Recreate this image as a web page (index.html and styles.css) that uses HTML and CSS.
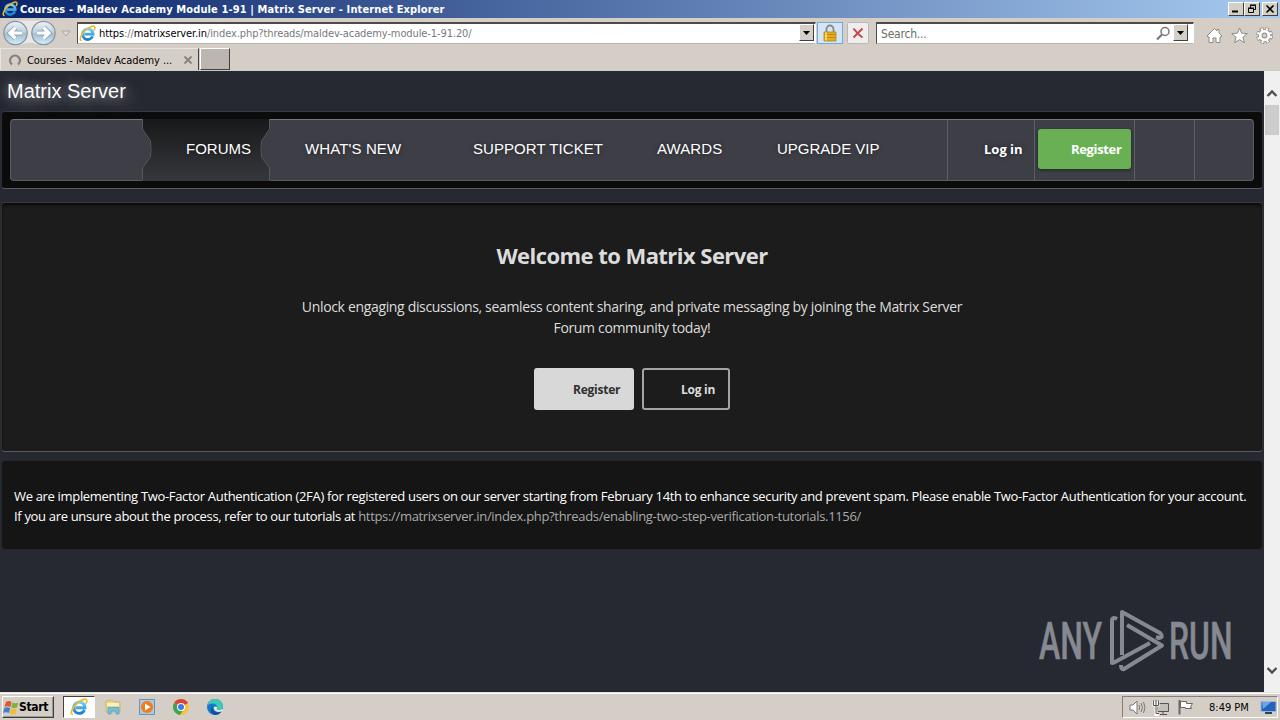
FILE: index.html
```html
<!DOCTYPE html>
<html lang="en">
<head>
<meta charset="utf-8">
<title>Courses - Maldev Academy Module 1-91 | Matrix Server</title>
<link rel="stylesheet" href="styles.css">
</head>
<body>
<svg class="defs" width="0" height="0">
  <defs>
    <linearGradient id="iebl" x1="0" y1="0" x2="0" y2="1"><stop offset="0" stop-color="#6fd0f8"/><stop offset="1" stop-color="#1b7fd0"/></linearGradient>
    <linearGradient id="ball" x1="0" y1="0" x2="0" y2="1"><stop offset="0" stop-color="#eef2f5"/><stop offset=".45" stop-color="#c3d2de"/><stop offset=".55" stop-color="#a4bdd0"/><stop offset="1" stop-color="#d8f0fa"/></linearGradient>
    <linearGradient id="tab" x1="0" y1="0" x2="0" y2="1"><stop offset="0" stop-color="#18191a"/><stop offset="1" stop-color="#35383c"/></linearGradient>
    <symbol id="ie" viewBox="0 0 16 16">
      <path d="M12.900 10.600A5 5 0 1 1 13.300 8.600H5" fill="none" stroke="url(#iebl)" stroke-width="2.600"/>
      <path d="M2.600 14.600C-.6 14.600 2 8 7 4.200 10.500 1.400 14.800 -.2 15 2.300c.1 1-.4 2-1 2.800" fill="none" stroke="#edb92e" stroke-width="1.500"/>
    </symbol>
  </defs>
</svg>

<header class="titlebar">
  <svg class="title-icon" width="16" height="16"><use href="#ie"/></svg>
  <span class="title-text">Courses - Maldev Academy Module 1-91 | Matrix Server - Internet Explorer</span>
  <div class="win-buttons">
    <span class="win-btn"><svg width="14" height="12"><path d="M3 8.500h6" stroke="#000" stroke-width="2"/></svg></span>
    <span class="win-btn"><svg width="14" height="12"><path d="M5.500 5V2.500h5v4H8.500M3.500 5.500h5v4h-5zM5 2h6M3 5h6" fill="none" stroke="#000"/></svg></span>
    <span class="win-btn last"><svg width="14" height="12"><path d="M3.500 2.500l7 7M10.500 2.500l-7 7" stroke="#000" stroke-width="1.600"/></svg></span>
  </div>
</header>

<div class="toolbar">
  <svg class="nav-balls" width="76" height="28">
    <path d="M15.500 1.500H43a12 12 0 0 1 12.500 12.500A12 12 0 0 1 43 26.500c-6 0-8-3-13.500-3s-7 3-14 3z" fill="#f2f2f2" opacity=".7"/>
    <g stroke="#7f96a8" stroke-width="1.200"><circle cx="15.500" cy="14" r="11.700" fill="url(#ball)"/><circle cx="43.500" cy="14" r="11.700" fill="url(#ball)"/></g>
    <g fill="none" stroke="#8ba6bb" stroke-width="5"><path d="M22 14H11M15.500 8.500L10 14l5.500 5.500"/><path d="M37 14h11M43.500 8.500L49 14l-5.500 5.500"/></g>
    <g fill="none" stroke="#fff" stroke-width="3.200"><path d="M22 14H11M15.500 8.500L10 14l5.500 5.500"/><path d="M37 14h11M43.500 8.500L49 14l-5.500 5.500"/></g>
    <path d="M62 12h8l-4 5z" fill="#dfdcd7" stroke="#aaa7a2"/>
  </svg>
  <div class="address">
    <svg width="17" height="17"><use href="#ie"/></svg>
    <span class="url"><b>https</b>://<b>matrixserver.in</b>/index.php?threads/maldev-academy-module-1-91.20/</span>
    <span class="drop"><svg width="11" height="14"><path d="M2 5h7L5.500 9z"/></svg></span>
  </div>
  <div class="lock"><svg width="16" height="18">
    <path d="M4.500 9V5a3.500 3.500 0 0 1 7 0v4" fill="none" stroke="#8d8879" stroke-width="1.800"/>
    <path d="M2 8h12v9H2z" fill="#e5ae1d" stroke="#a87a18" stroke-width=".7"/><path d="M2.500 10.500h11M2.500 13.500h11" stroke="#bd8618"/><path d="M4 8.500v8" stroke="#ffe06e" stroke-width="1.500"/>
  </svg></div>
  <div class="stop"><svg width="12" height="12"><path d="M1.500 1.500C4 5 7 8 10.500 10.500M10.500 1.500L1.500 10.500" stroke="#c04a50" stroke-width="2" fill="none"/></svg></div>
  <div class="search">
    <span class="hint">Search...</span>
    <svg width="15" height="15"><circle cx="9" cy="5.500" r="4" fill="none" stroke="#777" stroke-width="1.500"/><path d="M6 8.500l-5 5" stroke="#777" stroke-width="2.200"/></svg>
    <span class="drop"><svg width="11" height="14"><path d="M2 5h7L5.500 9z"/></svg></span>
  </div>
  <div class="cmds">
    <svg width="17" height="17"><path d="M1 9l7.500-7.500L11 4V2.500h2V6l3 3-1 1h-1v5.500h-4V11H7v4.500H3V10H2z" fill="#fff" stroke="#8d8b87"/></svg>
    <svg width="17" height="17"><path d="M8.500 1l2.100 5.200 5.700.4-4.400 3.600 1.500 5.500-4.900-3-4.900 3 1.500-5.500L.7 6.600l5.700-.4z" fill="#fff" stroke="#8d8b87"/></svg>
    <svg width="17" height="17"><circle cx="8.500" cy="8.500" r="6.500" fill="none" stroke="#8d8b87" stroke-width="3.800" stroke-dasharray="3.400 1.705"/><circle cx="8.500" cy="8.500" r="4.300" fill="none" stroke="#8d8b87" stroke-width="4.600"/><circle cx="8.500" cy="8.500" r="6.500" fill="none" stroke="#fff" stroke-width="2.400" stroke-dasharray="2 3.105" stroke-dashoffset="-.7"/><circle cx="8.500" cy="8.500" r="4.300" fill="none" stroke="#fff" stroke-width="2.800"/></svg>
  </div>
</div>

<div class="tabs">
  <div class="tab">
    <svg width="14" height="14"><path d="M4 11.500A5 5 0 1 1 10 11.500" fill="none" stroke="#85817c" stroke-width="2.200"/></svg>
    <span class="tab-title">Courses - Maldev Academy ...</span>
    <svg class="x" width="10" height="10"><path d="M1.500 1.500l7 7M8.500 1.500l-7 7" stroke="#85817c" stroke-width="1.800"/></svg>
  </div>
  <div class="newtab"></div>
</div>

<div class="view">
  <main class="page">
    <div class="brand"><span>Matrix Server</span></div>
    <nav class="nav">
      <div class="bar">
        <div class="slot home"></div>
        <a class="slot forums">
          <svg width="128" height="62"><path d="M0 0V10L8 22Q9 31 8 38L0 49V62H128V49L120 38Q119 31 120 22L128 10V0z" fill="url(#tab)"/><path d="M.5 0V10L8.500 22Q9.500 31 8.500 38L.5 49V61M127.500 0V10L119.500 22Q118.500 31 119.500 38L127.500 49V61" fill="none" stroke="#55575b"/></svg>
          <span>FORUMS</span>
        </a>
        <a class="slot new"><span>WHAT'S NEW</span></a>
        <a class="slot ticket"><span>SUPPORT TICKET</span></a>
        <a class="slot awards"><span>AWARDS</span></a>
        <a class="slot vip"><span>UPGRADE VIP</span></a>
        <a class="slot login"><span>Log in</span></a>
        <div class="slot reg"><a><span>Register</span></a></div>
        <div class="slot tool"></div>
        <div class="slot tool2"></div>
      </div>
    </nav>
    <section class="welcome">
      <h1>Welcome to Matrix Server</h1>
      <p><span>Unlock engaging discussions, seamless content sharing, and private messaging by joining the Matrix Server</span><br><span>Forum community today!</span></p>
      <div class="actions"><a class="btn solid"><span>Register</span></a><a class="btn line"><span>Log in</span></a></div>
    </section>
    <section class="notice">
      <div><span>We are implementing Two-Factor Authentication (2FA) for registered users on our server starting from February 14th to enhance security and prevent spam. Please enable Two-Factor Authentication for your account.</span></div>
      <div><span>If you are unsure about the process, refer to our tutorials at <a>https://matrixserver.in/index.php?threads/enabling-two-step-verification-tutorials.1156/</a></span></div>
    </section>
    <svg class="watermark" width="200" height="64" viewBox="1037 609 200 64">
      <g fill="#868991" stroke="#868991" stroke-width=".5" font-family="Roboto, sans-serif" font-size="52" font-weight="500">
        <text x="1039" y="659" textLength="63" lengthAdjust="spacingAndGlyphs">ANY</text>
        <text x="1169" y="659" textLength="63.500" lengthAdjust="spacingAndGlyphs">RUN</text>
      </g>
      <g fill="none" stroke="#868991" stroke-width="4" stroke-linejoin="round">
        <path d="M1117 619Q1112 616 1112 621V663L1115 662L1150 643"/>
        <path d="M1122 655V612L1160 633Q1164 637 1159 638L1156 637"/>
        <path d="M1127 625L1162 645.500L1124 669Q1121 670 1121 665"/>
      </g>
    </svg>
  </main>
  <div class="scroll">
    <svg width="16" height="34"><path d="M3.500 25L8 20.500L12.500 25" fill="none" stroke="#505050" stroke-width="2.400"/></svg>
    <div class="thumb"></div>
    <svg class="down" width="16" height="34"><path d="M3.500 10L8 14.500L12.500 10" fill="none" stroke="#505050" stroke-width="2.400"/></svg>
  </div>
</div>

<footer class="taskbar">
  <div class="start">
    <svg width="16" height="17"><path d="M3 3q3-2 5.500 0L7.500 8q-3-1.500-6 0z" fill="#e3562b"/><path d="M9.300 3.500q3 1.500 6 0L14 8.600q-3 1.500-5.700 0z" fill="#7db53b"/><path d="M1.300 9q3-1.500 6 0L6 14q-3-1.500-6 0z" fill="#3c83cf"/><path d="M8 9.500q3 1.500 5.800 0L12.500 15q-3 1.200-5.700-.5z" fill="#f3bd32"/></svg>
    <span>Start</span>
  </div>
  <div class="task active"><svg width="18" height="18" viewBox="0 0 16 16"><use href="#ie"/></svg></div>
  <div class="task"><svg width="18" height="18"><path d="M2 3l6-1 2 2h6v10H2z" fill="#e9d584" stroke="#c9ad58" stroke-width=".7"/><path d="M3 5h12v3H3z" fill="#f8f2c5"/><path d="M4 16V9.500h11V16h-3v-3H7v3z" fill="#74bedf" stroke="#559cc0" stroke-width=".7"/></svg></div>
  <div class="task"><svg width="18" height="18"><path d="M1.500 1.500h15v15h-15z" fill="#a9c9e5" stroke="#6b91b5"/><circle cx="9" cy="9" r="6" fill="#f27d18"/><path d="M7 5.500v7L12.500 9z" fill="#fff"/></svg></div>
  <div class="task"><svg width="18" height="18"><circle cx="9" cy="9" r="8" fill="#f5c638"/><path d="M9 9L2.070 5A8 8 0 0 1 16 5z" fill="#dd4336"/><path d="M9 9L2.070 5A8 8 0 0 0 8 17l4.500-7z" fill="#3ea352"/><circle cx="9" cy="9" r="4" fill="#fff"/><circle cx="9" cy="9" r="3" fill="#3c7be8"/></svg></div>
  <div class="task"><svg width="18" height="18"><circle cx="9" cy="9" r="8" fill="#1678c8"/><path d="M1.200 8C2 3 5.500 1 9 1c5 0 8 3.500 8 7 0 2.500-2 4-4.500 4C10 12 11 10 11 9c0-2-2-3.500-4.500-3.500C4 5.500 2 6.500 1.200 8z" fill="#43c6b4"/><path d="M7 8c-1.500 4 1.500 7.500 8 6-3 4-8 3.500-9.500.5C4.500 12 5 9.500 7 8z" fill="#124f9c"/><path d="M11 9c0 1-1 3 1.500 3 1.500 0 2.800-.5 3.700-1.500L17 13l-4 1c-4 0-6-3-5-5.500z" fill="#e5e7e0"/></svg></div>
  <div class="tray">
    <svg width="18" height="17"><path d="M2 6h3l4-4v13l-4-4H2z" fill="#fff" stroke="#777"/><path d="M11 6q1.500 2.500 0 5M13 4q3 4.500 0 9M15.500 3q3 5.500 0 11" fill="none" stroke="#777"/></svg>
    <svg width="18" height="17"><path d="M5.500 4.500h11v8h-11zM8 15.500h7M11 12.500v3" fill="#c2beb8" stroke="#555"/><path d="M2 2v4h4V2M4 6v9.500h3" fill="none" stroke="#fff" stroke-width="3"/><path d="M1.500 1.500v5h5v-5M4 1v5M4 6.500v8h3" fill="none" stroke="#555"/></svg>
    <svg width="18" height="17"><path d="M3.500 1v14.500" stroke="#666" stroke-width="2"/><path d="M4.500 2.500h6v2h6l-2 3.500 1 1.500h-6v-1h-5z" fill="#fff" stroke="#666"/></svg>
    <span class="clock">8:49 PM</span>
    <svg class="desk" width="17" height="15"><path d="M1 1.500h15v10H1z" fill="#2463bd" stroke="#9eb7cc"/><path d="M2 2h9L3 9z" fill="#69a8e6"/><path d="M5 13h7" stroke="#30415a" stroke-width="2"/></svg>
  </div>
</footer>
</body>
</html>
```

FILE: styles.css
```css
* { box-sizing: border-box; }
body { margin: 0; width: 1280px; height: 720px; overflow: hidden; display: flex; flex-direction: column; background: #d5cec7; font-family: "DejaVu Sans Condensed", "DejaVu Sans", sans-serif; font-size: 11px; color: #000; }
svg { display: block; flex: none; }
.defs { position: absolute; }
span { white-space: nowrap; }

.titlebar { flex: none; height: 18px; display: flex; align-items: center; padding: 0 2px; background: linear-gradient(90deg, #0a246a, #a6caf0); }
.title-text { margin-left: 2px; color: #fff; font-weight: bold; letter-spacing: 0.12px; }
.win-buttons { margin-left: auto; display: flex; }
.win-btn { width: 16px; height: 14px; background: #d4d0c8; border: 1px solid; border-color: #fff #404040 #404040 #fff; }
.win-btn.last { margin-left: 2px; }

.toolbar { flex: none; height: 29px; display: flex; align-items: flex-start; padding-top: 1px; }
.nav-balls { margin-right: 1px; }
.address { width: 739px; height: 22px; margin-top: 3px; padding: 0 1px 0 1px; background: #fff; border: 1px solid; border-color: #504a46 #fff #b8b4ae #504a46; border-top-width: 2px; display: flex; align-items: center; }
.url { margin-left: 3px; color: #77797c; letter-spacing: -0.1px; }
.url b { font-weight: normal; color: #000; }
.drop { margin-left: auto; align-self: flex-start; width: 15px; height: 17px; background: #d4d0c8; border: 1px solid; border-color: #fff #404040 #404040 #fff; display: flex; align-items: center; justify-content: center; }
.lock { width: 26px; height: 22px; margin: 3px 0 0 1px; border: 1px solid #74a9dc; background: #d4e5f8; display: flex; align-items: center; justify-content: center; }
.stop { width: 22px; height: 22px; margin: 3px 0 0 4px; border: 1px solid #b9b9bd; border-radius: 2px; background: #f0edee; display: flex; align-items: center; justify-content: center; }
.search { width: 318px; height: 22px; margin: 3px 0 0 7px; padding: 0 5px 0 4px; background: #fff; border: 1px solid; border-color: #504a46 #fff #b8b4ae #504a46; border-top-width: 2px; display: flex; align-items: center; }
.hint { color: #6c6c6c; margin-right: auto; font-size: 12px; letter-spacing: -0.2px; }
.search .drop { margin-left: 2px; }
.cmds { display: flex; gap: 8px; margin: 8px 0 0 12px; }

.tabs { flex: none; height: 24px; display: flex; border-bottom: 1px solid #c9cdc3; }
.tab { width: 199px; margin-top: 1px; border: 1px solid; border-color: #e8e5e0 #404040 transparent #e8e5e0; border-bottom: 0; display: flex; align-items: center; padding-left: 7px; }
.tab-title { margin-left: 5px; padding-top: 1px; letter-spacing: -0.06px; }
.tab .x { margin-left: auto; margin-right: 5px; }
.newtab { width: 30px; height: 22px; margin: 1px 0 0 1px; background: #bcb5b0; border: 1px solid; border-color: #fff #404040 #404040 #fff; }

.view { flex: none; height: 621px; display: flex; }
.page { width: 1264px; background: #262932; position: relative; font-family: "Open Sans", "Noto Sans", sans-serif; }
.scroll { width: 16px; background: #f0f0f0; display: flex; flex-direction: column; align-items: center; }
.thumb { width: 14px; height: 30px; background: #cdcdcd; }
.down { margin-top: auto; }
.brand { height: 40px; padding: 8px 7px; color: #fff; font: 20px/24px "Liberation Sans", Arial, sans-serif; text-shadow: 0 0 12px rgba(255,255,255,.6), 8px 6px 18px rgba(200,200,205,.35); }
.brand span { display: block; }
.nav { height: 78px; margin: 0 1px; padding: 8px; background: #0b0b0c; border: 1px solid; border-color: #36393f #2b2e34 #5a5b5e; border-radius: 4px; }
.bar { height: 62px; margin-top: -1px; display: flex; border: 1px solid; border-color: #75767a #5a5b60 #5a5b60 #5a5b60; border-radius: 4px; background: #3d3e46; font: 15px/58px "Liberation Sans", Arial, sans-serif; color: #fff; }
.slot { position: relative; flex: none; height: 60px; }
.slot span { text-shadow: 0 0 4px rgba(0,0,0,.5); }
.home { width: 132px; }
.forums { width: 127px; padding-left: 43px; }
.forums svg { position: absolute; left: -1px; top: -1px; }
.forums span { position: relative; }
.new { width: 168px; padding-left: 35px; letter-spacing: 0.12px; }
.ticket { width: 184px; padding-left: 35px; letter-spacing: 0.06px; }
.awards { width: 120px; padding-left: 35px; letter-spacing: 0.1px; }
.vip { width: 205px; padding-left: 35px; }
.login, .reg { font: bold 13px/58px "Open Sans", "Noto Sans", sans-serif; border-left: 1px solid #5d5e64; }
.login { width: 87px; padding-left: 36px; }
.reg { width: 100px; padding: 9px 3px; }
.reg a { display: block; width: 93px; height: 40px; background: #69b054; border-radius: 3px; line-height: 40px; padding-left: 33px; letter-spacing: -0.35px; box-shadow: 0 1px 3px #1b2a1a; }
.reg span { text-shadow: none; }
.tool { width: 60px; border-left: 1px solid #5d5e64; }
.tool2 { width: 59px; border-left: 1px solid #5d5e64; }
.welcome { margin: 13px 1px 0; height: 250px; background: #1c1c1c; border: 1px solid; border-color: #383b3e #2f3235 #5a5c5c; border-radius: 4px; box-shadow: inset 0 2px 3px #0a0a0a; text-align: center; color: #dcdcdc; padding-top: 37px; }
.welcome h1 { margin: 0; font-size: 22px; line-height: 30px; letter-spacing: -0.55px; }
.welcome p { margin: 26px 0 0; font-size: 14px; line-height: 21px; letter-spacing: -0.34px; }
.actions { display: flex; justify-content: center; gap: 8px; margin-top: 30px; }
.btn { height: 42px; border-radius: 3px; font-weight: bold; font-size: 12px; line-height: 43px; text-align: left; letter-spacing: -0.25px; }
.solid { width: 100px; background: #d8d8d8; color: #303030; padding-left: 39px; }
.line { width: 88px; border: 2px solid #a3a3a3; line-height: 40px; padding-left: 37px; }
.notice { margin: 8px 1px 0; height: 90px; background: #151515; border: 1px solid #24272b; border-radius: 4px; color: #fff; font-size: 13px; line-height: 20px; letter-spacing: -0.325px; padding: 25px 12px 0; }
.notice a { color: #aaa; }
.watermark { position: absolute; left: 1037px; top: 538px; }

.taskbar { flex: none; height: 28px; border-top: 1px solid #e4e1dc; box-shadow: inset 0 1px #fff; display: flex; align-items: flex-start; padding: 3px 2px 0; }
.start { width: 52px; height: 22px; margin-right: 9px; padding-left: 0; border: 1px solid; border-color: #fff #404040 #404040 #fff; box-shadow: inset -1px -1px #999; display: flex; align-items: center; font-weight: bold; font-size: 12px; letter-spacing: -0.3px; }
.task { width: 32px; height: 22px; margin-right: 2px; display: flex; align-items: center; justify-content: center; border: 1px solid transparent; }
.task.active { background: #fff; border-color: #404040 #fff #fff #404040; }
.tray { margin-left: auto; width: 156px; height: 22px; border: 1px solid; border-color: #808080 #fff #fff #808080; display: flex; align-items: center; gap: 6px; padding-left: 5px; }
.clock { margin-left: 9px; }
.desk { margin-left: auto; }
```
